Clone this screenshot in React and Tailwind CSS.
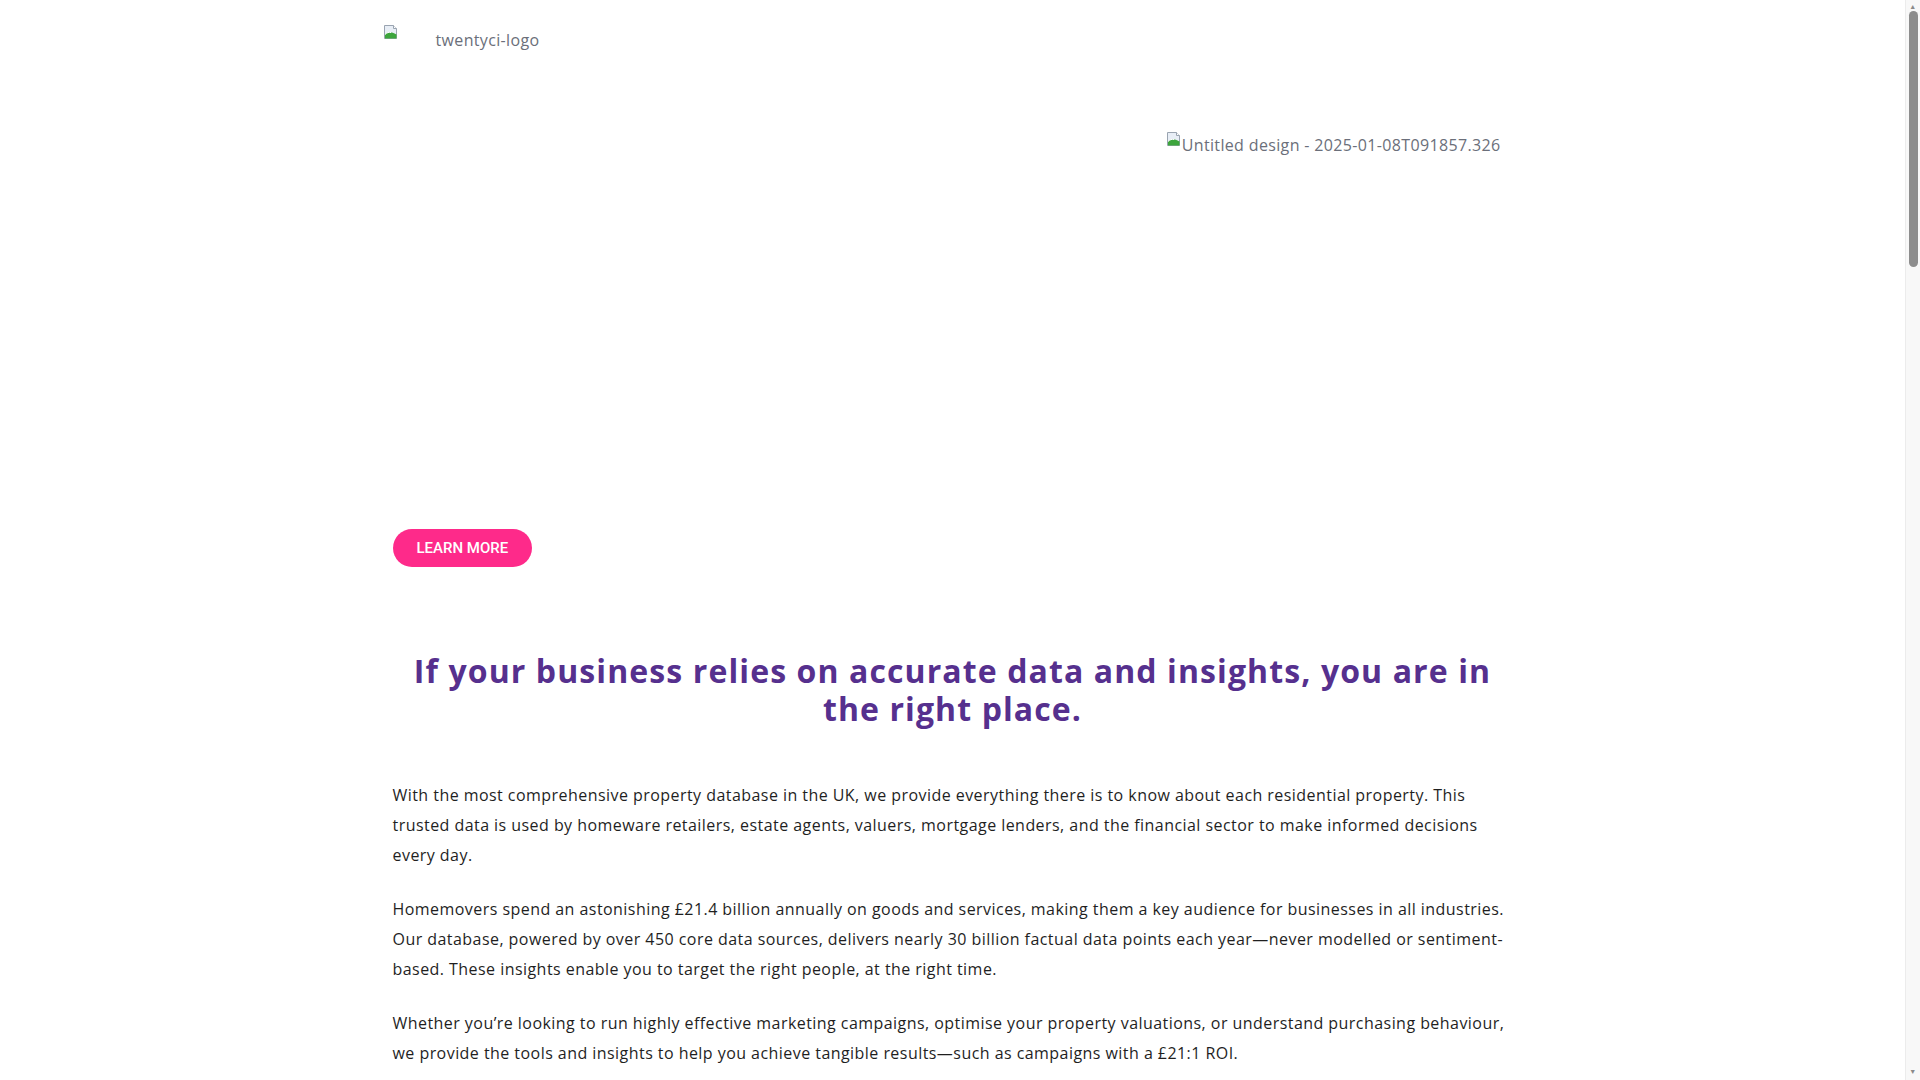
import React from "react";

function BrokenImage() {
  return (
    <svg width="16" height="16" viewBox="0 0 16 16" className="shrink-0">
      <path d="M1.5 1.5h9l3 3v10h-12z" fill="#e8eef6" stroke="#9aa4b1" />
      <path d="M2 14.5l0-4c3-3 6-3 11.5 0v4z" fill="#3da53d" />
      <path d="M2 10.5c2-2 4-2.5 6-2" stroke="#ffffff" strokeWidth="1" fill="none" />
      <path d="M10.5 1.5v3h3" fill="#ffffff" stroke="#9aa4b1" />
    </svg>
  );
}

const paragraphs = [
  "With the most comprehensive property database in the UK, we provide everything there is to know about each residential property. This trusted data is used by homeware retailers, estate agents, valuers, mortgage lenders, and the financial sector to make informed decisions every day.",
  "Homemovers spend an astonishing £21.4 billion annually on goods and services, making them a key audience for businesses in all industries. Our database, powered by over 450 core data sources, delivers nearly 30 billion factual data points each year—never modelled or sentiment-based. These insights enable you to target the right people, at the right time.",
  "Whether you’re looking to run highly effective marketing campaigns, optimise your property valuations, or understand purchasing behaviour, we provide the tools and insights to help you achieve tangible results—such as campaigns with a £21:1 ROI.",
];

export default function App() {
  return (
    <div className="bg-white font-['Open_Sans',sans-serif] text-[#1f1f1f] tracking-[0.45px]">
      {/* browser scrollbar */}
      <div className="fixed top-0 right-0 w-[15px] h-screen bg-[#f8f8f8] border-l border-[#ececec] flex flex-col items-center">
        <div className="h-[10px] flex items-end text-[7px] leading-none text-[#8a8a8a]">▲</div>
        <div className="mt-[1px] w-[9px] h-[256px] rounded-full bg-[#8d8d8d]"></div>
        <div className="flex-1"></div>
        <div className="h-[12px] text-[7px] leading-none text-[#8a8a8a]">▼</div>
      </div>

      <div className="mr-[15px] min-h-[4400px]">
        {/* header */}
        <header className="h-[119px]">
          <div className="max-w-[1140px] mx-auto pt-[24px] flex items-start">
            <BrokenImage />
            <span className="ml-[37px] mt-[4px] text-[16px] leading-[24px] tracking-[0.35px] text-[#6b6f7a]">
              twentyci-logo
            </span>
          </div>
        </header>

        {/* hero */}
        <section className="max-w-[1120px] mx-auto flex h-[448px]">
          <div className="flex-1 flex flex-col justify-end">
            <div>
              <button className="h-[38px] px-[24px] rounded-full bg-[#fe2a8a] text-white text-[15px] tracking-normal font-medium uppercase font-['Roboto',sans-serif]">
                Learn More
              </button>
            </div>
          </div>
          <div className="flex-1 flex justify-end pr-[12px] pt-[12px]">
            <div className="flex items-start text-[16px] leading-[24px] tracking-[0.35px] text-[#6b6f7a]">
              <BrokenImage />
              <span className="mt-[2px]">Untitled design - 2025-01-08T091857.326</span>
            </div>
          </div>
        </section>

        {/* intro */}
        <section className="max-w-[1120px] mx-auto pt-[85px]">
          <h2 className="text-center text-[32px] leading-[38px] font-bold tracking-[1.1px] text-[#56308e] px-[10px]">
            If your business relies on accurate data and insights, you are in the right place.
          </h2>
          <div className="mt-[52px] flex flex-col gap-6">
            {paragraphs.map((p, i) => (
              <p key={i} className="text-[16px] leading-[30px]">
                {p}
              </p>
            ))}
          </div>
        </section>
      </div>
    </div>
  );
}
